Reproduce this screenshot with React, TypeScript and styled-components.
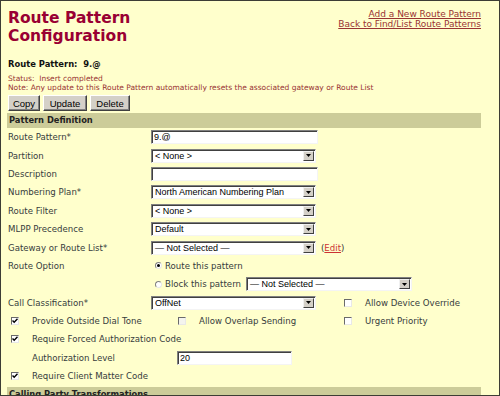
import React from 'react';
import styled, { createGlobalStyle } from 'styled-components';

const GlobalStyle = createGlobalStyle`
  html, body { margin: 0; padding: 0; }
  body { font-family: "DejaVu Sans", Verdana, sans-serif; }
`;

const Frame = styled.div`
  width: 500px;
  height: 396px;
  box-sizing: border-box;
  border: 1px solid #3d3d35;
  background: #ffffcc;
  padding: 0 18px 0 6px;
  overflow: hidden;
`;

const Top = styled.div`
  display: flex;
  justify-content: space-between;
  align-items: flex-start;
  padding-top: 8px;
`;

const Title = styled.h1`
  margin: 0;
  padding-left: 1px;
  font: bold 15.5px/18px "DejaVu Sans", Verdana, sans-serif;
  color: #990033;
`;

const Links = styled.div`
  display: flex;
  flex-direction: column;
  align-items: flex-end;
  font-size: 9px;
  line-height: 10px;
`;

const Link = styled.a`
  color: #993333;
  text-decoration: underline;
`;

const PatternName = styled.div`
  margin-top: 14px;
  padding-left: 1px;
  font-weight: bold;
  font-size: 8.4px;
  line-height: 10px;
  color: #111;
`;

const Status = styled.div`
  margin-top: 6px;
  padding-left: 1px;
  font-size: 7.5px;
  line-height: 8.5px;
  color: #993333;
`;

const Buttons = styled.div`
  display: flex;
  gap: 3px;
  padding-left: 1px;
  margin-top: 3px;
`;

const Button = styled.button<{ $w: number }>`
  width: ${p => p.$w}px;
  height: 16px;
  padding: 0;
  box-sizing: border-box;
  background: #d4d0c8;
  border: 1px solid;
  border-color: #ffffff #404040 #404040 #ffffff;
  box-shadow: inset -1px -1px #808080;
  font: 9.5px "Liberation Sans", Arial, sans-serif;
  color: #000;
`;

const SectionBar = styled.div`
  margin-top: 2px;
  height: 15px;
  background: #cccc99;
  padding-left: 2px;
  font-weight: bold;
  font-size: 8.3px;
  line-height: 15px;
  color: #222;
`;

const Form = styled.div`
  padding-left: 1px;
`;

const Row = styled.div`
  display: flex;
  align-items: center;
  height: 18.4px;
  color: #363c3c;
  font-size: 8.6px;
  white-space: nowrap;
`;

const Label = styled.div<{ $w?: number }>`
  width: ${p => p.$w ?? 143}px;
  flex: none;
`;

const Spacer = styled.div<{ $w: number }>`
  width: ${p => p.$w}px;
  flex: none;
`;

const TextBox = styled.div<{ $w: number }>`
  width: ${p => p.$w}px;
  height: 14px;
  box-sizing: border-box;
  background: #fff;
  border: 1px solid;
  border-color: #808080 #f4f4f4 #f4f4f4 #808080;
  box-shadow: inset 1px 1px #404040;
  padding-left: 2px;
  font: 9px/12px "Liberation Sans", Arial, sans-serif;
  color: #000;
  flex: none;
`;

const SelectBox = styled.div<{ $w: number }>`
  width: ${p => p.$w}px;
  height: 14px;
  box-sizing: border-box;
  background: #fff;
  border: 1px solid;
  border-color: #808080 #f4f4f4 #f4f4f4 #808080;
  box-shadow: inset 1px 1px #404040;
  display: flex;
  align-items: center;
  justify-content: space-between;
  padding: 0 1px 0 3px;
  font: 9px/12px "Liberation Sans", Arial, sans-serif;
  color: #000;
  flex: none;
`;

const ArrowButton = styled.span`
  width: 11px;
  height: 10px;
  box-sizing: border-box;
  background: #d4d0c8;
  border: 1px solid;
  border-color: #f0f0f0 #404040 #404040 #f0f0f0;
  display: flex;
  align-items: center;
  justify-content: center;
`;

const EditWrap = styled.span`
  margin-left: 5px;
  color: #333;
`;

const EditLink = styled.a`
  color: #cc3333;
  text-decoration: underline;
`;

const Radio = styled.span<{ $on?: boolean }>`
  width: 7px;
  height: 7px;
  border-radius: 50%;
  box-sizing: border-box;
  background: #fff;
  border: 1px solid;
  border-color: #808080 #e8e8e8 #e8e8e8 #808080;
  display: inline-flex;
  align-items: center;
  justify-content: center;
  margin: 0 3px 0 4px;
  flex: none;
  &::after {
    content: '';
    width: 3px;
    height: 3px;
    border-radius: 50%;
    background: ${p => (p.$on ? '#000' : 'transparent')};
  }
`;

const RadioText = styled.span<{ $w?: number }>`
  ${p => (p.$w ? `width: ${p.$w}px; flex: none;` : '')}
`;

const CheckCell = styled.div<{ $w: number; $pl: number }>`
  width: ${p => p.$w}px;
  padding-left: ${p => p.$pl}px;
  box-sizing: border-box;
  flex: none;
  display: flex;
  align-items: center;
`;

const Box = styled.span<{ $disabled?: boolean }>`
  width: 8px;
  height: 8px;
  box-sizing: border-box;
  background: ${p => (p.$disabled ? '#f4f4ee' : '#fff')};
  border: 1px solid;
  border-color: #6a6a6a #e8e8e8 #e8e8e8 #6a6a6a;
  display: flex;
  align-items: center;
  justify-content: center;
`;

const Arrow = () => (
  <svg width="5" height="3" viewBox="0 0 5 3">
    <path d="M0 0h5L2.5 3z" fill="#000" />
  </svg>
);

const Select: React.FC<{ w: number; value: string }> = ({ w, value }) => (
  <SelectBox $w={w}>
    <span>{value}</span>
    <ArrowButton><Arrow /></ArrowButton>
  </SelectBox>
);

const Checkbox: React.FC<{ checked?: boolean; disabled?: boolean }> = ({ checked, disabled }) => (
  <Box $disabled={disabled}>
    {checked && (
      <svg width="6" height="6" viewBox="0 0 6 6">
        <path d="M0.5 2.5L2.2 4.3L5.5 0.8" stroke="#000" strokeWidth="1.4" fill="none" />
      </svg>
    )}
  </Box>
);

const App: React.FC = () => {
  return (
    <>
      <GlobalStyle />
      <Frame>
        <Top>
          <Title>Route Pattern<br />Configuration</Title>
          <Links>
            <Link href="#">Add a New Route Pattern</Link>
            <Link href="#">Back to Find/List Route Patterns</Link>
          </Links>
        </Top>

        <PatternName>Route Pattern:&nbsp; 9.@</PatternName>
        <Status>
          Status:&nbsp; Insert completed<br />
          Note: Any update to this Route Pattern automatically resets the associated gateway or Route List
        </Status>

        <Buttons>
          <Button $w={32}>Copy</Button>
          <Button $w={44}>Update</Button>
          <Button $w={40}>Delete</Button>
        </Buttons>

        <SectionBar>Pattern Definition</SectionBar>

        <Form>
          <Row>
            <Label>Route Pattern*</Label>
            <TextBox $w={167}>9.@</TextBox>
          </Row>
          <Row>
            <Label>Partition</Label>
            <Select w={165} value="< None >" />
          </Row>
          <Row>
            <Label>Description</Label>
            <TextBox $w={167} />
          </Row>
          <Row>
            <Label>Numbering Plan*</Label>
            <Select w={165} value="North American Numbering Plan" />
          </Row>
          <Row>
            <Label>Route Filter</Label>
            <Select w={165} value="< None >" />
          </Row>
          <Row>
            <Label>MLPP Precedence</Label>
            <Select w={165} value="Default" />
          </Row>
          <Row>
            <Label>Gateway or Route List*</Label>
            <Select w={165} value="— Not Selected —" />
            <EditWrap>(<EditLink href="#">Edit</EditLink>)</EditWrap>
          </Row>
          <Row>
            <Label>Route Option</Label>
            <Radio $on />
            <RadioText>Route this pattern</RadioText>
          </Row>
          <Row>
            <Spacer $w={143} />
            <Radio />
            <RadioText $w={81}>Block this pattern</RadioText>
            <Select w={166} value="— Not Selected —" />
          </Row>
          <Row>
            <Label>Call Classification*</Label>
            <Select w={165} value="OffNet" />
            <Spacer $w={28} />
            <CheckCell $w={21} $pl={0}><Checkbox /></CheckCell>
            <span>Allow Device Override</span>
          </Row>
          <Row>
            <CheckCell $w={24} $pl={3}><Checkbox checked /></CheckCell>
            <Label $w={145}>Provide Outside Dial Tone</Label>
            <CheckCell $w={22} $pl={1}><Checkbox disabled /></CheckCell>
            <Label $w={145}>Allow Overlap Sending</Label>
            <CheckCell $w={21} $pl={0}><Checkbox /></CheckCell>
            <span>Urgent Priority</span>
          </Row>
          <Row>
            <CheckCell $w={24} $pl={3}><Checkbox checked /></CheckCell>
            <span>Require Forced Authorization Code</span>
          </Row>
          <Row>
            <Spacer $w={24} />
            <Label $w={145}>Authorization Level</Label>
            <TextBox $w={115}>20</TextBox>
          </Row>
          <Row>
            <CheckCell $w={24} $pl={3}><Checkbox checked /></CheckCell>
            <span>Require Client Matter Code</span>
          </Row>
        </Form>

        <SectionBar>Calling Party Transformations</SectionBar>
      </Frame>
    </>
  );
};

export default App;
